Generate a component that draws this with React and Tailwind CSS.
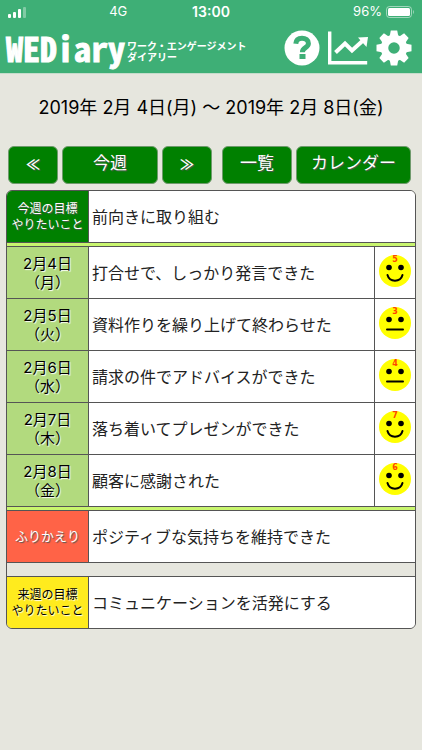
import React from "react";

const GOTHIC = "font-['Inter','Noto_Sans_CJK_JP',sans-serif]";

const days = [
  { date: "2月4日", day: "（月）", text: "打合せで、しっかり発言できた", score: 5, mood: "smile" },
  { date: "2月5日", day: "（火）", text: "資料作りを繰り上げて終わらせた", score: 3, mood: "flat" },
  { date: "2月6日", day: "（水）", text: "請求の件でアドバイスができた", score: 4, mood: "flat" },
  { date: "2月7日", day: "（木）", text: "落ち着いてプレゼンができた", score: 7, mood: "smile" },
  { date: "2月8日", day: "（金）", text: "顧客に感謝された", score: 6, mood: "smile" },
];

const StatusBar = () => (
  <div className="grid grid-cols-3 items-center px-2 h-6 text-[13px] text-white">
    <div className="flex items-center justify-between">
      <svg className="h-3 w-5" viewBox="0 0 20 12" fill="currentColor">
        <rect x="0" y="8" width="3" height="4" rx="1" />
        <rect x="5" y="6" width="3" height="6" rx="1" />
        <rect x="10" y="3" width="3" height="9" rx="1" />
        <rect x="15" y="1" width="3" height="11" rx="1" opacity="0.35" />
      </svg>
      <span className="pr-4">4G</span>
    </div>
    <span className="text-center text-sm font-semibold">13:00</span>
    <div className="flex items-center justify-end gap-1">
      <span>96%</span>
      <svg className="h-3 w-7" viewBox="0 0 28 12" fill="none">
        <rect x="0.5" y="0.5" width="25" height="11" rx="3" stroke="white" opacity="0.5" />
        <rect x="2" y="2" width="22" height="8" rx="1.5" fill="white" />
        <path d="M27 4v4c1-.4 1-3.6 0-4z" fill="white" opacity="0.6" />
      </svg>
    </div>
  </div>
);

const HelpIcon = () => (
  <svg className="size-9" viewBox="0 0 36 36">
    <circle cx="18" cy="18" r="17.5" fill="white" />
    <path d="M11.8 13.8c.3-4 3-5.600 6.200-5.600 3.500 0 6.400 1.800 6.400 5.200 0 4.500-6 4-6 8.800" fill="none" stroke="#3eaf76" strokeWidth="5" />
    <rect x="15.500" y="24" width="6" height="5" fill="#3eaf76" />
  </svg>
);

const ChartIcon = () => (
  <svg className="h-9 w-10" viewBox="0 0 40 36" fill="none" stroke="white">
    <path d="M1.700 1.500v31.300h37.500" strokeWidth="3.400" />
    <path d="M7.500 22.500l9.500-9 7 7L35 10.500" strokeWidth="4" />
    <path d="M30 7.500l10-.5-1.500 10z" fill="white" stroke="none" />
  </svg>
);

const teeth = [0, 45, 90, 135, 180, 225, 270, 315];

const GearIcon = () => (
  <svg className="size-9" viewBox="0 0 36 36" fill="white">
    <circle cx="18" cy="18" r="9.500" fill="none" stroke="white" strokeWidth="7.500" />
    {teeth.map(a => (
      <path key={a} d="M13.500 7L14.800.5h6.400L22.500 7z" transform={`rotate(${a} 18 18)`} />
    ))}
  </svg>
);

const Header = () => (
  <header className="bg-[#3eaf76] pb-0.5 border-b border-[#c5dccb]">
    <StatusBar />
    <div className="flex items-center justify-between pl-1.5 pr-2.5 h-[47px] text-white">
      <h1 className="flex items-center gap-0.5 font-bold">
        <span className="font-['Noto_Sans_Mono_CJK_JP',monospace] text-[34px] leading-9 [-webkit-text-stroke:1px_white]">WEDiary</span>
        <span className="text-[10px] leading-[11px] pt-2 whitespace-nowrap">ワーク・エンゲージメント<br />ダイアリー</span>
      </h1>
      <nav className="flex items-center gap-2">
        <a href="#help" aria-label="ヘルプ"><HelpIcon /></a>
        <a href="#chart" aria-label="グラフ"><ChartIcon /></a>
        <a href="#settings" aria-label="設定"><GearIcon /></a>
      </nav>
    </div>
  </header>
);

const NavButton = ({ className, children }) => (
  <button className={`h-[38px] rounded-md border border-[#6f9a6c] bg-[#008000] pb-0.5 text-white whitespace-nowrap [text-shadow:1px_1px_1px_#555] ${className}`}>
    {children}
  </button>
);

const Face = ({ score, mood }) => (
  <svg className="mx-auto size-8" viewBox="0 0 32 32" role="img">
    <circle cx="16" cy="16" r="16" fill="#ffff00" />
    <circle cx="10" cy="12.500" r="2.800" />
    <circle cx="22" cy="12.500" r="2.800" />
    {mood === "smile"
      ? <path d="M8.500 20c2 7.500 13 7.500 15 0" fill="none" stroke="black" strokeWidth="2" strokeLinecap="round" />
      : <path d="M8 22.500h16" stroke="black" strokeWidth="2" strokeLinecap="round" />}
    <text x="16" y="7" textAnchor="middle" className="font-['DejaVu_Sans'] text-[8px] font-bold" fill="#ff4500">{score}</text>
  </svg>
);

const Strip = () => (
  <tr>
    <td colSpan={3} className="h-1 border-b border-[#555] bg-[#c8f56e]"></td>
  </tr>
);

const labelCell = "h-[52px] border-b border-r border-[#555] text-center font-normal";
const textCell = "h-[52px] border-b border-[#555] bg-white px-[3px] text-base text-[#222]";

const WeekTable = () => (
  <div className="overflow-hidden rounded-md border border-[#555]">
    <table className="w-full table-fixed border-separate border-spacing-0">
      <colgroup>
        <col className="w-[82px]" />
        <col />
        <col className="w-[41px]" />
      </colgroup>
      <tbody>
        <tr>
          <th scope="row" className={`${labelCell} bg-[#008000] text-xs leading-4 text-white [text-shadow:1px_1px_1px_#555]`}>今週の目標<br />やりたいこと</th>
          <td colSpan={2} className={textCell}>前向きに取り組む</td>
        </tr>
        <Strip />
        {days.map(d => (
          <tr key={d.date}>
            <th scope="row" className={`${labelCell} bg-[#b2da7e] text-[15px] leading-[19px] text-black [text-shadow:1px_1px_1px_white]`}>{d.date}<br />{d.day}</th>
            <td className={textCell}>{d.text}</td>
            <td className="border-b border-l border-[#555] bg-white pb-1"><Face score={d.score} mood={d.mood} /></td>
          </tr>
        ))}
        <Strip />
        <tr>
          <th scope="row" className={`${labelCell} bg-[#ff6347] text-[13px] text-white [text-shadow:1px_1px_1px_#555]`}>ふりかえり</th>
          <td colSpan={2} className={textCell}>ポジティブな気持ちを維持できた</td>
        </tr>
        <tr>
          <td colSpan={3} className="h-3.5 border-b border-[#555]"></td>
        </tr>
        <tr>
          <th scope="row" className="h-[51px] border-r border-[#555] bg-[#ffeb1e] text-center text-xs font-normal leading-4 text-black [text-shadow:1px_1px_1px_white]">来週の目標<br />やりたいこと</th>
          <td colSpan={2} className="h-[51px] bg-white px-[3px] text-base text-[#222]">コミュニケーションを活発にする</td>
        </tr>
      </tbody>
    </table>
  </div>
);

export default function App() {
  return (
    <div lang="ja" className={`min-h-screen bg-[#e6e6de] ${GOTHIC}`}>
      <Header />
      <main className="px-1.5">
        <p className="pt-5 text-center text-lg leading-7 text-black">2019年 2月 4日(月) 〜 2019年 2月 8日(金)</p>
        <div className="mt-6 mb-1.5 flex gap-1 px-0.5">
          <NavButton className="w-[50px] text-sm font-bold">≪</NavButton>
          <NavButton className="w-24 text-[17px]">今週</NavButton>
          <NavButton className="w-[50px] text-sm font-bold">≫</NavButton>
          <NavButton className="ml-1.5 w-[70px] text-[17px]">一覧</NavButton>
          <NavButton className="w-[115px] text-[17px]">カレンダー</NavButton>
        </div>
        <WeekTable />
      </main>
    </div>
  );
}
